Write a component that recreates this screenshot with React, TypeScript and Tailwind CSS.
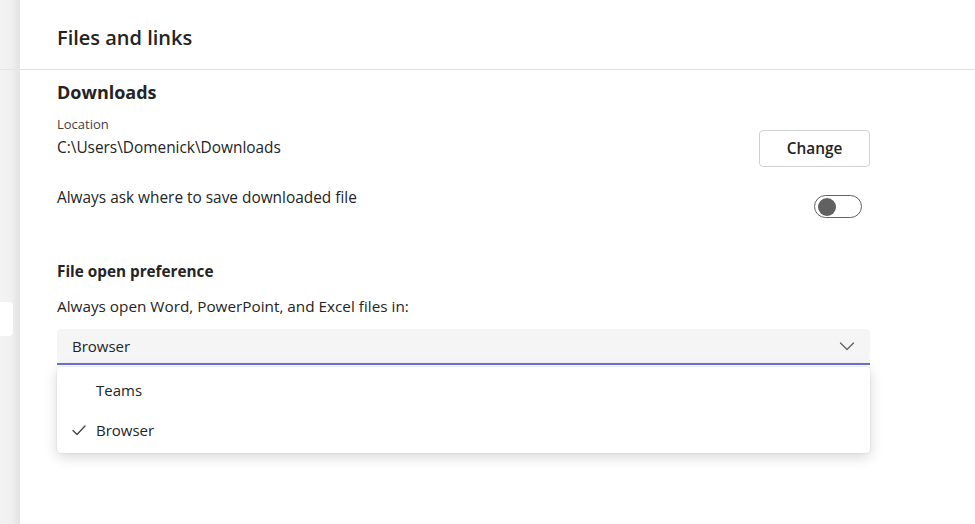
import React from 'react';

const font = { fontFamily: '"Open Sans", "Noto Sans", sans-serif' };

const Toggle = () => (
    <div className="w-[48px] h-[23px] rounded-full border border-[#616161] flex items-center px-[3px]">
        <div className="w-[18px] h-[18px] rounded-full bg-[#616161]" />
    </div>
);

const Chevron = () => (
    <svg width="16" height="16" viewBox="0 0 16 16" fill="none">
        <path d="M1.5 5L8 11.5L14.5 5" stroke="#616161" strokeWidth="1.3" strokeLinecap="round" strokeLinejoin="round" />
    </svg>
);

const Check = () => (
    <svg width="16" height="16" viewBox="0 0 16 16" fill="none">
        <path d="M2 8.5L6 12.5L14 4" stroke="#424242" strokeWidth="1.3" strokeLinecap="round" strokeLinejoin="round" />
    </svg>
);

const App = () => {
    return (
        <div className="w-[975px] h-[524px] flex bg-white text-[#242424] overflow-hidden" style={font}>
            {/* Left rail */}
            <div className="w-[20px] shrink-0 bg-gradient-to-r from-[#f3f3f3] via-[#f1f1f1] to-[#e4e4e4] flex flex-col">
                <div className="h-[70px] border-b border-[#e6e6e6]" />
                <div className="mt-[232px] w-[13px] h-[34px] bg-white rounded-r-[4px]" />
            </div>

            <div className="flex-1 flex flex-col">
                {/* Header */}
                <div className="h-[70px] border-b border-[#e0e0e0] flex items-center pl-[37px] pt-[7px]">
                    <h1 className="text-[20px] font-semibold">Files and links</h1>
                </div>

                <div className="pl-[37px] pr-[105px] pt-[10px]">
                    <h2 className="text-[18px] font-bold leading-[24px]">Downloads</h2>

                    <div className="flex items-start justify-between mt-[11px]">
                        <div>
                            <div className="text-[13px] leading-[18px] text-[#424242]">Location</div>
                            <div className="text-[15.4px] leading-[22px] mt-[4px]">C:\Users\Domenick\Downloads</div>
                        </div>
                        <button className="w-[111px] h-[37px] border border-[#d1d1d1] rounded-[4px] text-[15.4px] font-semibold bg-white mt-[15px]">
                            Change
                        </button>
                    </div>

                    <div className="flex items-start justify-between mt-[20px]">
                        <div className="text-[15.4px] leading-[22px]">Always ask where to save downloaded file</div>
                        <div className="mr-[8px] mt-[8px]">
                            <Toggle />
                        </div>
                    </div>

                    <h3 className="text-[15.3px] font-bold leading-[20px] mt-[43px]">File open preference</h3>
                    <div className="text-[15.3px] leading-[22px] mt-[14px]">Always open Word, PowerPoint, and Excel files in:</div>

                    <div className="relative mt-[12px]">
                        <div className="h-[36px] bg-[#f5f5f5] rounded-t-[4px] border-b-2 border-[#6d71d8] flex items-center justify-between pl-[15px] pr-[15px]">
                            <span className="text-[15px]">Browser</span>
                            <Chevron />
                        </div>
                        <div className="absolute left-0 right-0 top-[38px] bg-white rounded-[4px] shadow-[0_4px_14px_rgba(0,0,0,0.16),0_0_2px_rgba(0,0,0,0.12)] py-[3px]">
                            <div className="h-[40px] flex items-center pl-[39px] text-[15px]">Teams</div>
                            <div className="h-[40px] flex items-center pl-[14px] text-[15px]">
                                <span className="w-[25px] flex"><Check /></span>
                                Browser
                            </div>
                        </div>
                    </div>
                </div>
            </div>
        </div>
    );
};

export default App;
